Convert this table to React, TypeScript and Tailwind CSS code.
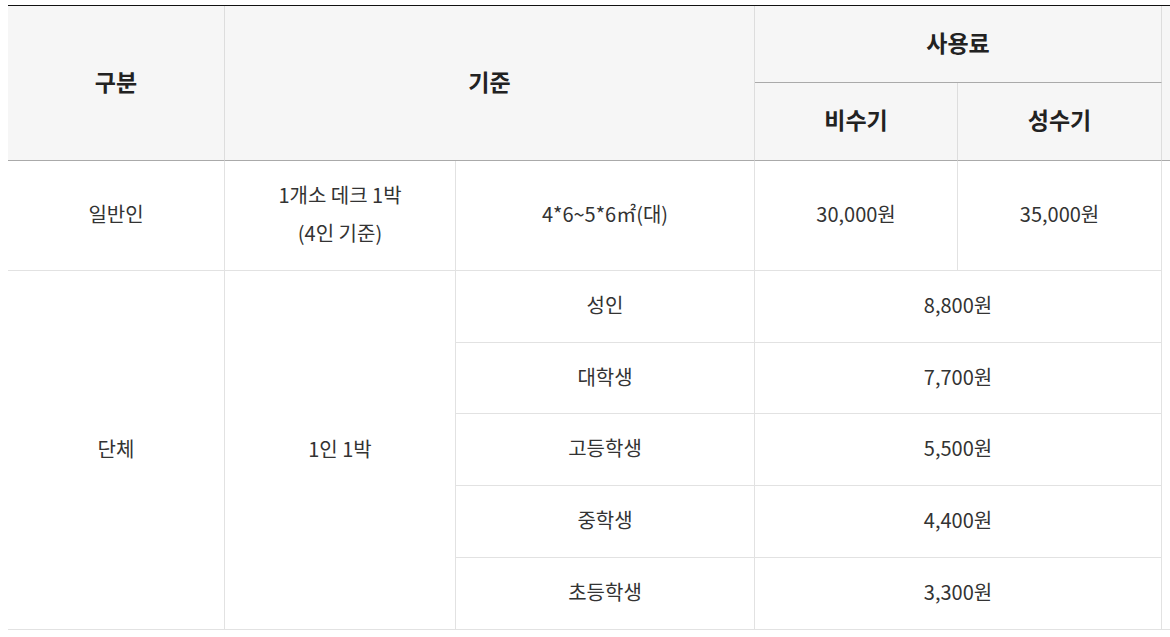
import React from 'react'

const font = { fontFamily: '"Noto Sans CJK KR", "Noto Sans", sans-serif' }

const groupRows = [
  { label: '성인', price: '8,800원' },
  { label: '대학생', price: '7,700원' },
  { label: '고등학생', price: '5,500원' },
  { label: '중학생', price: '4,400원' },
  { label: '초등학생', price: '3,300원' },
]

export default function App() {
  const th = 'bg-[#f6f6f6] text-[23px] font-bold text-[#222] text-center align-middle border-r border-[#dddddd] pb-[4px]'
  const td = 'text-[20px] text-[#333] text-center align-middle border-r border-b border-[#e2e2e2] pb-[3px]'

  return (
    <div className="w-[1170px] h-[637px] overflow-hidden bg-white pl-2 pt-[5px]" style={font}>
      <table className="table-fixed w-[1162px] border-separate border-spacing-0 border-t border-[#111]">
        <colgroup>
          <col className="w-[217px]" />
          <col className="w-[231px]" />
          <col className="w-[299px]" />
          <col className="w-[203px]" />
          <col className="w-[204px]" />
          <col className="w-[8px]" />
        </colgroup>
        <thead>
          <tr className="h-[77px]">
            <th rowSpan={2} className={`${th} border-b border-b-[#aaaaaa]`}>구분</th>
            <th rowSpan={2} colSpan={2} className={`${th} border-b border-b-[#aaaaaa]`}>기준</th>
            <th colSpan={2} className={`${th} border-b border-b-[#aaaaaa]`}>사용료</th>
            <th rowSpan={2} className="bg-[#f6f6f6] border-b border-[#aaaaaa]"></th>
          </tr>
          <tr className="h-[78px]">
            <th className={`${th} border-b border-b-[#aaaaaa]`}>비수기</th>
            <th className={`${th} border-b border-b-[#aaaaaa]`}>성수기</th>
          </tr>
        </thead>
        <tbody>
          <tr className="h-[110px]">
            <td className={td}>일반인</td>
            <td className={`${td} leading-[38px]`}>
              1개소 데크 1박
              <br />
              (4인 기준)
            </td>
            <td className={td}>4*6~5*6㎡(대)</td>
            <td className={td}>30,000원</td>
            <td className={td}>35,000원</td>
            <td rowSpan={6} className="border-b border-[#e2e2e2]"></td>
          </tr>
          {groupRows.map((row, i) => (
            <tr key={row.label} className={i === 1 ? 'h-[71px]' : 'h-[72px]'}>
              {i === 0 && (
                <>
                  <td rowSpan={5} className={td}>단체</td>
                  <td rowSpan={5} className={td}>1인 1박</td>
                </>
              )}
              <td className={td}>{row.label}</td>
              <td colSpan={2} className={td}>{row.price}</td>
            </tr>
          ))}
        </tbody>
      </table>
    </div>
  )
}
